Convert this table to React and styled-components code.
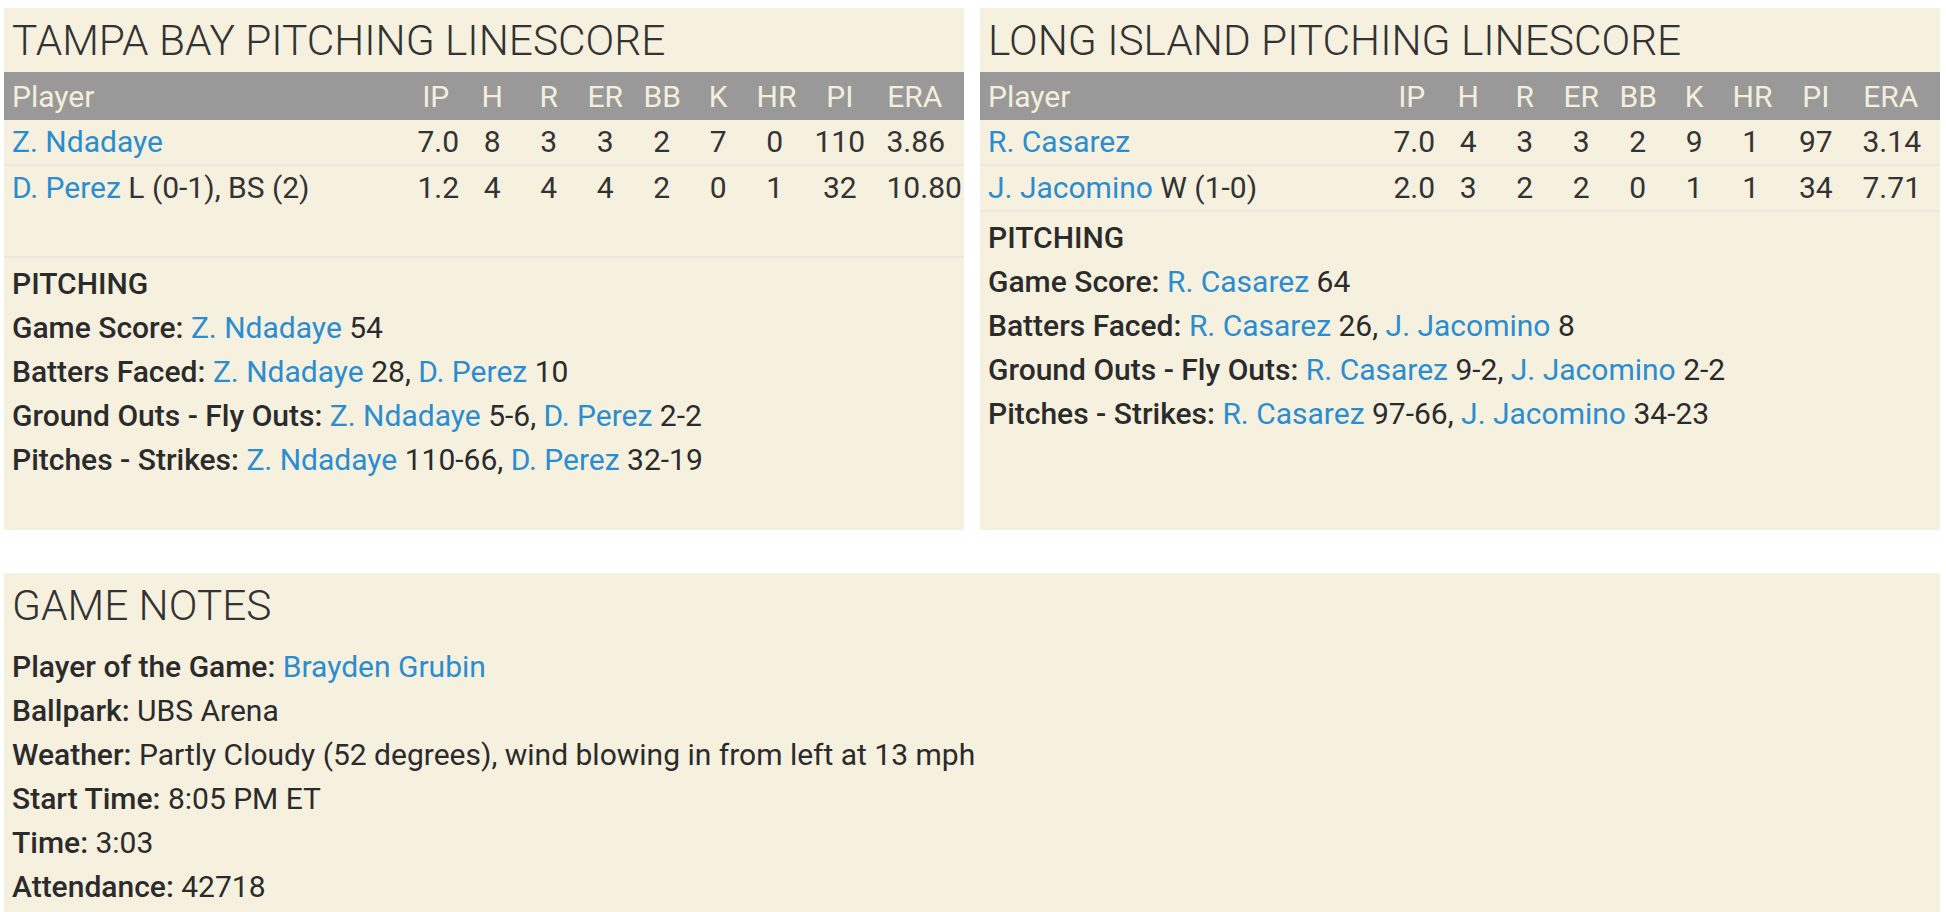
import React from 'react';
import styled, { createGlobalStyle } from 'styled-components';

const GlobalStyle = createGlobalStyle`
  body {
    margin: 0;
    background: #ffffff;
    font-family: Roboto, "Liberation Sans", sans-serif;
    color: #2b2b2b;
  }
`;

const Page = styled.div`
  padding: 8px 6px 0 4px;
  display: flex;
  flex-direction: column;
  gap: 43px;
`;

const TopRow = styled.div`
  display: flex;
  gap: 16px;
`;

const Panel = styled.section`
  flex: 1;
  background: #f6f1df;
`;

const Title = styled.h2`
  margin: 0;
  height: 64px;
  padding: 0 8px;
  font-size: 42.4px;
  font-weight: 300;
  line-height: 66px;
  color: #333333;
  white-space: nowrap;
`;

const COLUMNS = '1fr repeat(7, 56.5px) 73.5px 76.5px';

const HeaderRow = styled.div`
  display: grid;
  grid-template-columns: ${COLUMNS};
  padding-right: 11px;
  height: 48px;
  align-items: center;
  background: #999999;
  color: #f4efdc;
  font-size: 30px;
`;

const Row = styled.div`
  display: grid;
  grid-template-columns: ${COLUMNS};
  padding-right: 11px;
  line-height: 44px;
  padding-bottom: ${props => (props.$extra ? '46px' : '0')};
  border-bottom: 2px solid #e9e7e2;
  font-size: 30px;
  color: #333333;
`;

const NameCell = styled.div`
  padding-left: 8px;
  white-space: nowrap;
`;

const StatCell = styled.div`
  padding: 0 10px;
  text-align: center;
  white-space: nowrap;
  min-width: 0;
`;

const Link = styled.span`
  color: #2a8dcf;
`;

const Section = styled.div`
  padding: 4px 8px 48px;
  font-size: 30px;
  line-height: 44px;
  color: #2b2b2b;
`;

const SectionHead = styled.div`
  font-weight: 500;
  text-transform: uppercase;
`;

const Line = styled.div`
  white-space: nowrap;
`;

const Label = styled.span`
  font-weight: 500;
`;

const STATS = ['IP', 'H', 'R', 'ER', 'BB', 'K', 'HR', 'PI', 'ERA'];

function Linescore({ title, pitchers, notes, extraRow }) {
  return (
    <Panel>
      <Title>{title}</Title>
      <HeaderRow>
        <NameCell>Player</NameCell>
        {STATS.map(s => <StatCell key={s}>{s}</StatCell>)}
      </HeaderRow>
      {pitchers.map((p, i) => (
        <Row key={p.name} $extra={extraRow && i === pitchers.length - 1}>
          <NameCell>
            <Link>{p.name}</Link>{p.dec ? ` ${p.dec}` : ''}
          </NameCell>
          {p.line.map((v, j) => <StatCell key={j}>{v}</StatCell>)}
        </Row>
      ))}
      <Section>
        <SectionHead>Pitching</SectionHead>
        {notes.map(n => (
          <Line key={n.label}>
            <Label>{n.label}:</Label>{' '}
            {n.items.map((it, k) => (
              <React.Fragment key={k}>
                {k > 0 ? ', ' : ''}
                <Link>{it[0]}</Link> {it[1]}
              </React.Fragment>
            ))}
          </Line>
        ))}
      </Section>
    </Panel>
  );
}

const tampa = {
  title: 'TAMPA BAY PITCHING LINESCORE',
  pitchers: [
    { name: 'Z. Ndadaye', line: ['7.0', 8, 3, 3, 2, 7, 0, 110, '3.86'] },
    { name: 'D. Perez', dec: 'L (0-1), BS (2)', line: ['1.2', 4, 4, 4, 2, 0, 1, 32, '10.80'] },
  ],
  notes: [
    { label: 'Game Score', items: [['Z. Ndadaye', '54']] },
    { label: 'Batters Faced', items: [['Z. Ndadaye', '28'], ['D. Perez', '10']] },
    { label: 'Ground Outs - Fly Outs', items: [['Z. Ndadaye', '5-6'], ['D. Perez', '2-2']] },
    { label: 'Pitches - Strikes', items: [['Z. Ndadaye', '110-66'], ['D. Perez', '32-19']] },
  ],
};

const longIsland = {
  title: 'LONG ISLAND PITCHING LINESCORE',
  pitchers: [
    { name: 'R. Casarez', line: ['7.0', 4, 3, 3, 2, 9, 1, 97, '3.14'] },
    { name: 'J. Jacomino', dec: 'W (1-0)', line: ['2.0', 3, 2, 2, 0, 1, 1, 34, '7.71'] },
  ],
  notes: [
    { label: 'Game Score', items: [['R. Casarez', '64']] },
    { label: 'Batters Faced', items: [['R. Casarez', '26'], ['J. Jacomino', '8']] },
    { label: 'Ground Outs - Fly Outs', items: [['R. Casarez', '9-2'], ['J. Jacomino', '2-2']] },
    { label: 'Pitches - Strikes', items: [['R. Casarez', '97-66'], ['J. Jacomino', '34-23']] },
  ],
};

const NotesBody = styled.div`
  padding: 8px 8px 20px;
  font-size: 30px;
  line-height: 44px;
  color: #2b2b2b;
`;

function GameNotes() {
  return (
    <Panel>
      <Title>GAME NOTES</Title>
      <NotesBody>
        <Line><Label>Player of the Game:</Label> <Link>Brayden Grubin</Link></Line>
        <Line><Label>Ballpark:</Label> UBS Arena</Line>
        <Line><Label>Weather:</Label> Partly Cloudy (52 degrees), wind blowing in from left at 13 mph</Line>
        <Line><Label>Start Time:</Label> 8:05 PM ET</Line>
        <Line><Label>Time:</Label> 3:03</Line>
        <Line><Label>Attendance:</Label> 42718</Line>
      </NotesBody>
    </Panel>
  );
}

export default function App() {
  return (
    <>
      <GlobalStyle />
      <Page>
        <TopRow>
          <Linescore {...tampa} extraRow />
          <Linescore {...longIsland} />
        </TopRow>
        <GameNotes />
      </Page>
    </>
  );
}
